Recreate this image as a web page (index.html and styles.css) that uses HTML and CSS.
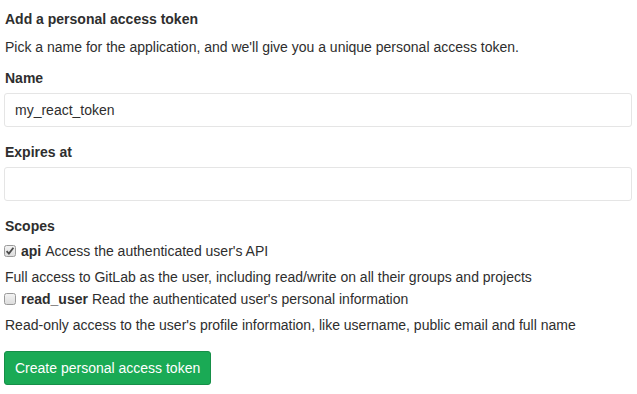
FILE: index.html
```html
<!DOCTYPE html>
<html><head>
  <meta charset="utf-8">
  <title>Add a personal access token</title>
  <link rel="stylesheet" href="styles.css">
</head>
<body>

<form class="token-form">
  <h4 class="title">Add a personal access token</h4>
  <p class="lead">Pick a name for the application, and we'll give you a unique personal access token.</p>

  <div class="form-group">
    <label class="label">Name</label>
    <input class="form-control" type="text" value="my_react_token">
  </div>

  <div class="form-group">
    <label class="label">Expires at</label>
    <input class="form-control" type="text" value="">
  </div>

  <label class="label">Scopes</label>
  <div class="scope first">
    <svg class="check" width="12" height="12" viewBox="0 0 12 12">
      <defs><linearGradient id="g1" x1="0" y1="0" x2="0" y2="1"><stop offset="0" stop-color="#f4f4f4"/><stop offset="1" stop-color="#dcdcdc"/></linearGradient></defs>
      <rect x="0.5" y="0.5" width="11" height="11" rx="2" fill="url(#g1)" stroke="#9a9a9a"/>
      <path d="M2.6 6.2 L4.9 8.6 L9.4 2.8" fill="none" stroke="#4a4a4a" stroke-width="1.8"/>
    </svg>
    <b>api</b> Access the authenticated user's API
  </div>
  <div class="help">Full access to GitLab as the user, including read/write on all their groups and projects</div>
  <div class="scope">
    <svg class="check" width="12" height="12" viewBox="0 0 12 12">
      <defs><linearGradient id="g2" x1="0" y1="0" x2="0" y2="1"><stop offset="0" stop-color="#f4f4f4"/><stop offset="1" stop-color="#dcdcdc"/></linearGradient></defs>
      <rect x="0.5" y="0.5" width="11" height="11" rx="2" fill="url(#g2)" stroke="#9a9a9a"/>
    </svg>
    <b>read_user</b> Read the authenticated user's personal information
  </div>
  <div class="help last">Read-only access to the user's profile information, like username, public email and full name</div>

  <button class="btn-create" type="button">Create personal access token</button>
</form>

</body>
</html>
```

FILE: styles.css
```css
body,html { color:#2e2e2e; background:white; margin:0; padding:0; }
body { font-family: "Liberation Sans", Arial, sans-serif; font-size:14px; line-height:20px; }

.token-form {
  padding: 9px 5px 0 4px;
}

.title {
  margin: 0 0 8px 1px;
  font-size: 14px;
  font-weight: bold;
  line-height: 20px;
}
.lead {
  margin: 0 0 11px 1px;
}

.label {
  display: block;
  font-weight: bold;
  margin: 0 0 5px 1px;
}

.form-group {
  margin-bottom: 15px;
}

.form-control {
  display: block;
  box-sizing: border-box;
  width: 100%;
  height: 34px;
  margin: 0;
  padding: 0 10px;
  border: 1px solid #e5e5e5;
  border-radius: 3px;
  font: inherit;
  color: #2e2e2e;
  outline: none;
}

.scope {
  display: flex;
  align-items: center;
  gap: 5px;
  margin: 2px 0 0 0;
}
.scope.first { margin-top: 1px; }
.scope b { margin-right: -1px; }
.check { flex: none; }

.help {
  margin: 6px 0 0 1px;
}

.btn-create {
  display: block;
  margin-top: 16px;
  height: 34px;
  padding: 0 10px;
  background: #1aaa55;
  border: 1px solid #168f48;
  border-radius: 3px;
  color: #fff;
  font: inherit;
}
```
